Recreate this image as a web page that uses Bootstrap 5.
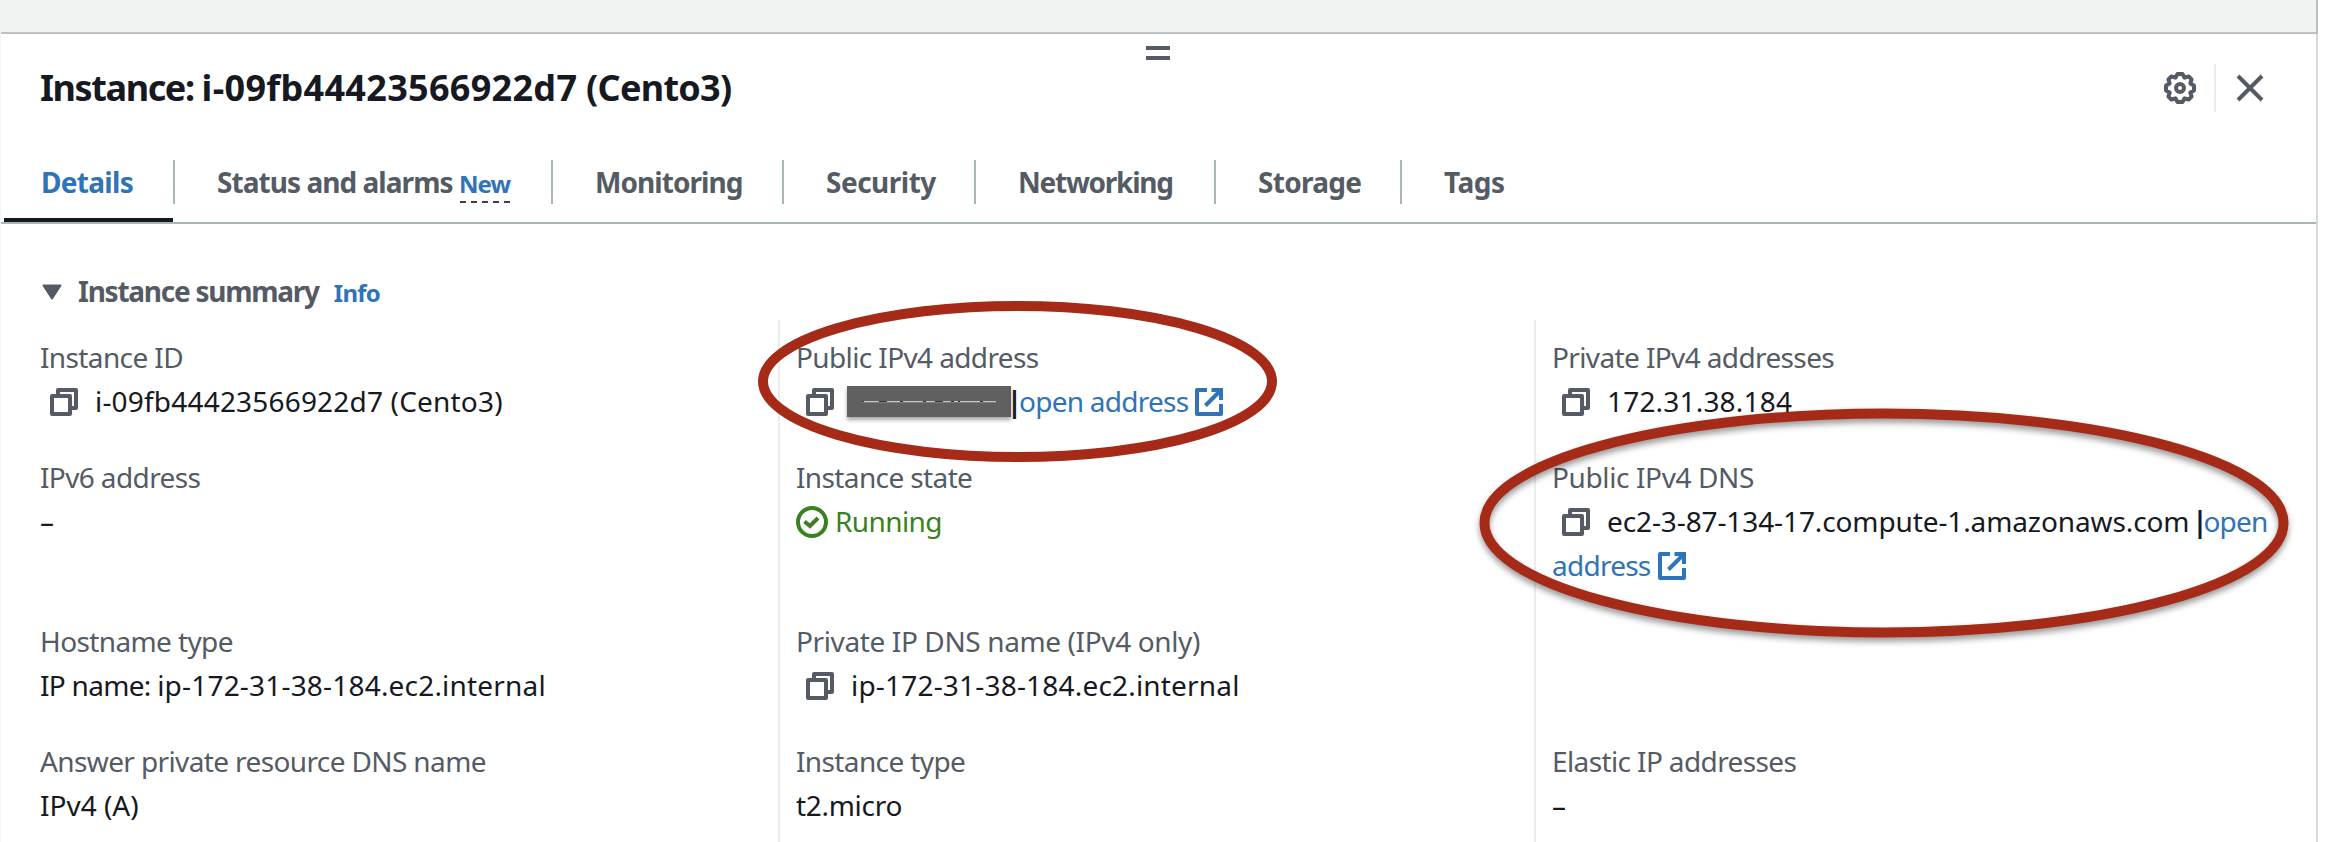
<!DOCTYPE html>
<html lang="en">
<head>
<meta charset="utf-8">
<meta name="viewport" content="width=device-width, initial-scale=1">
<title>Instance details</title>
<link href="https://cdn.jsdelivr.net/npm/bootstrap@5.3.0/dist/css/bootstrap.min.css" rel="stylesheet">
<style>
  :root { --ink: #16191f; --muted: #545b64; --link: #2f73b9; --rule: #aab7b8; --soft: #eaeded; }
  body { font: 28px/44px "Noto Sans", "Open Sans", sans-serif; color: var(--ink); background: #fff; }
  .shell { width: 2318px; height: 842px; border-right: 2px solid #d5dbdb; border-left: 1px solid #f3f4f4; }
  .page-strip { height: 34px; background: #f1f3f3; border-bottom: 2px solid #bcc2c2; margin-right: -2px; border-right: 2px solid #b9bfbf; }
  .grip { height: 26px; padding-top: 12px; padding-right: 1px; }
  .grip span { width: 24px; height: 4px; background: var(--muted); }
  .grip span + span { margin-top: 6px; }
  .panel-head { height: 56px; padding: 0 50px 0 39px; }
  .panel-head h1 { font-size: 36px; line-height: 56px; font-weight: 700; letter-spacing: .3px; }
  .panel-head h1 .prefix { letter-spacing: -1.4px; }
  .panel-head h1 .alias { letter-spacing: -.7px; }
  .tool-rule { width: 2px; height: 48px; background: var(--soft); margin: 0 18px; }
  .tool { width: 32px; height: 32px; color: var(--muted); }

  .tabs { display: grid; grid-template-columns: 174px 378px 231px 192px 240px 186px auto; height: 108px; border-bottom: 2px solid var(--rule); padding-top: 28px; }
  .tabs .nav-link { position: relative; height: 78px; padding: 18px 0 0 42px; color: var(--muted); font-weight: 700; line-height: 40px; white-space: nowrap; }
  .tabs .nav-link:not(:last-child)::after { content: ""; position: absolute; right: 0; top: 16px; width: 2px; height: 44px; background: var(--rule); }
  .tabs .nav-link.active { color: var(--link); padding-left: 40px; }
  .tabs .nav-link.active::before { content: ""; position: absolute; left: 3px; right: 2px; bottom: 0; height: 4px; background: var(--ink); }
  .new-tag { position: relative; font-size: 24px; letter-spacing: -.9px; color: var(--link); }
  .new-tag::after { content: ""; position: absolute; left: 1px; width: 50px; bottom: -3px; height: 2px; background: repeating-linear-gradient(90deg, #3b404a 0 6px, transparent 6px 11px); }

  .summary-head { padding: 45px 0 0 41px; height: 96px; color: var(--muted); font-weight: 700; }
  .summary-head svg { align-self: flex-start; margin: 15px 16px 0 0; }
  .info { font-size: 24px; color: var(--link); margin-left: 15px; letter-spacing: -.8px; }

  .facts { display: grid; grid-template-columns: 738px 756px 1fr; height: 522px; margin-left: 39px; overflow: hidden; }
  .facts > div { padding-top: 15px; }
  .facts > div + div { border-left: 2px solid var(--soft); padding-left: 16px; }
  .fact { height: 120px; margin: 0; }
  .fact.tall { height: 164px; }
  .fact dt { font-weight: 400; color: var(--muted); letter-spacing: -.62px; }
  .fact dd { margin: 0; white-space: nowrap; }
  .fact a { color: var(--link); text-decoration: none; letter-spacing: -.75px; }
  .copy { width: 28px; height: 28px; color: var(--muted); margin: 2px 17px 0 10px; flex: none; }
  .ext { width: 28px; height: 28px; flex: none; color: var(--link); margin: 2px 0 0 7px; }
  .redacted { width: 164px; height: 31px; background: #606060; box-shadow: 0 3px 4px rgba(0,0,0,.35); margin: 1px 0 0 -4px; }
  .redacted svg { display: block; }
  .pipe { font-weight: 700; width: 7px; display: flex; justify-content: center; margin-right: 1px; }
  .pipe.far { margin-left: 7px; margin-right: 0; }
  .state { color: #3b8021; letter-spacing: -.6px; }
  .state svg { width: 32px; height: 32px; margin: 2px 7px 0 0; }
  .marks { position: absolute; left: -1px; top: 0; pointer-events: none; }
  .marks .lifted { filter: drop-shadow(0 4px 3px rgba(0,0,0,.4)); }

  /* tracking steps */
  .t-wide { letter-spacing: .19px; }
  .t-1 { letter-spacing: -.11px; }
  .t-2 { letter-spacing: -.3px; }
  .fact dt.t-3 { letter-spacing: -.38px; }
  .t-5 { letter-spacing: -.5px; }
  .t-7 { letter-spacing: -.7px; }
  .t-9 { letter-spacing: -.95px; }
  .t-12 { letter-spacing: -1.25px; }
</style>
</head>
<body>
<svg width="0" height="0" class="position-absolute">
  <symbol id="i-copy" viewBox="0 0 28 28"><g fill="none" stroke="currentColor" stroke-width="4" stroke-linejoin="round"><path d="M2 8h18v18H2z"/><path d="M8 7V2h18v18h-5"/></g></symbol>
  <symbol id="i-ext" viewBox="0 0 28 28"><g fill="none" stroke="currentColor" stroke-width="4"><path d="M12 2H2v24h24V16" stroke-linejoin="round"/><path d="M16.500 2H26v10M26 2L10.500 17.500"/></g></symbol>
</svg>
<main class="shell position-relative">
  <div class="page-strip"></div>
  <div class="grip d-flex flex-column align-items-center"><span></span><span></span></div>
  <header class="panel-head d-flex align-items-center">
    <h1 class="m-0 me-auto"><span class="prefix">Instance: </span>i-09fb44423566922d7<span class="alias"> (Cento3)</span></h1>
    <svg class="tool" viewBox="0 0 32 32" fill="none" stroke="currentColor" stroke-width="4"><path stroke-linejoin="round" d="M13.500 2h5l2.100 3.700 4-1.300 3 3-1.300 4 3.700 2.100v5l-3.700 2.100 1.300 4-3 3-4-1.300-2.100 3.700h-5l-2.100-3.700-4 1.300-3-3 1.300-4L2 18.500v-5l3.700-2.100-1.300-4 3-3 4 1.300z"/><circle cx="16" cy="16" r="4"/></svg>
    <span class="tool-rule"></span>
    <svg class="tool" viewBox="0 0 32 32" fill="none" stroke="currentColor" stroke-width="4"><path d="M4 4l24 24M28 4L4 28"/></svg>
  </header>
  <nav class="nav tabs">
    <a class="nav-link active t-7">Details</a>
    <a class="nav-link t-9">Status and alarms <span class="new-tag">New</span></a>
    <a class="nav-link t-9">Monitoring</a>
    <a class="nav-link t-5">Security</a>
    <a class="nav-link t-12">Networking</a>
    <a class="nav-link t-7">Storage</a>
    <a class="nav-link t-5">Tags</a>
  </nav>
  <div class="summary-head d-flex align-items-baseline">
    <svg width="20" height="16" viewBox="0 0 20 16"><path d="M1.500 1.500h17L10 14.500z" fill="currentColor" stroke="currentColor" stroke-width="2" stroke-linejoin="round"/></svg>
    <span class="t-12">Instance summary</span><a href="#" class="info text-decoration-none">Info</a>
  </div>
  <section class="facts">
    <div>
      <dl class="fact"><dt>Instance ID</dt><dd class="d-flex align-items-center"><svg class="copy"><use href="#i-copy"/></svg><span class="t-wide">i-09fb44423566922d7 (Cento3)</span></dd></dl>
      <dl class="fact tall"><dt>IPv6 address</dt><dd>–</dd></dl>
      <dl class="fact"><dt>Hostname type</dt><dd class="t-wide"><span class="t-7">IP name: </span>ip-172-31-38-184.ec2.internal</dd></dl>
      <dl class="fact"><dt>Answer private resource DNS name</dt><dd>IPv4 (A)</dd></dl>
    </div>
    <div>
      <dl class="fact"><dt>Public IPv4 address</dt><dd class="d-flex align-items-center"><svg class="copy"><use href="#i-copy"/></svg><span class="redacted"><svg width="164" height="31"><path d="M15 15.500h134" stroke="#c4c4c4"/><path d="M15 16.500h134" stroke="#7d7d7d"/><path d="M15 15.500h2m15 0h8m13 0h3m20 0h3m9 0h8m8 0h3m4 0h2m20 0h3" stroke="#333"/></svg></span><span class="pipe">|</span><a href="#">open address</a><svg class="ext"><use href="#i-ext"/></svg></dd></dl>
      <dl class="fact tall"><dt>Instance state</dt><dd class="state d-flex align-items-center"><svg viewBox="0 0 32 32" fill="none" stroke="currentColor" stroke-width="4"><circle cx="16" cy="16" r="14"/><path d="M8.500 15.500l5.500 4.500 8-8"/></svg>Running</dd></dl>
      <dl class="fact"><dt class="t-3">Private IP DNS name (IPv4 only)</dt><dd class="d-flex align-items-center"><svg class="copy"><use href="#i-copy"/></svg><span class="t-wide">ip-172-31-38-184.ec2.internal</span></dd></dl>
      <dl class="fact"><dt>Instance type</dt><dd class="t-2">t2.micro</dd></dl>
    </div>
    <div>
      <dl class="fact"><dt>Private IPv4 addresses</dt><dd class="d-flex align-items-center"><svg class="copy"><use href="#i-copy"/></svg><span class="t-wide">172.31.38.184</span></dd></dl>
      <dl class="fact tall"><dt class="t-3">Public IPv4 DNS</dt><dd class="d-flex align-items-center"><svg class="copy"><use href="#i-copy"/></svg><span class="t-1">ec2-3-87-134-17.compute-1.amazonaws.com</span><span class="pipe far">|</span><a href="#">open</a></dd><dd class="d-flex align-items-center"><a href="#">address</a><svg class="ext"><use href="#i-ext"/></svg></dd></dl>
      <div class="fact"></div>
      <dl class="fact"><dt>Elastic IP addresses</dt><dd>–</dd></dl>
    </div>
  </section>
  <!-- hand-drawn callouts over the address fields -->
  <svg class="marks" width="2318" height="842" fill="none" stroke="#a52b18" stroke-width="10">
    <ellipse cx="1017.500" cy="381.500" rx="254.500" ry="75.500"/>
    <ellipse class="lifted" cx="1884" cy="523" rx="399.500" ry="109.500"/>
  </svg>
</main>
</body>
</html>
